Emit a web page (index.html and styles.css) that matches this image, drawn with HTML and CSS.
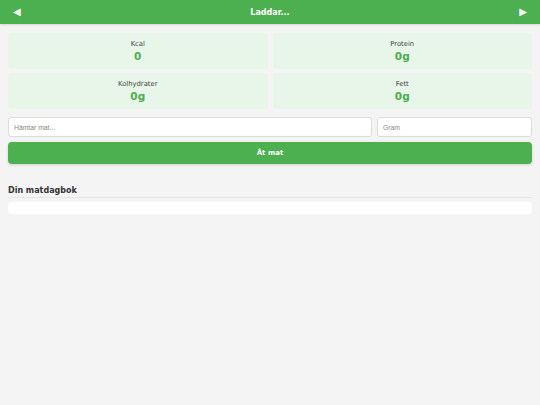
FILE: index.html
```html
<!DOCTYPE html>
<html lang="sv">
<head>
<meta charset="utf-8">
<title>Matdagbok</title>
<link rel="stylesheet" href="styles.css">
</head>
<body>
<header class="topbar">
  <button class="nav-btn" aria-label="Föregående">◀</button>
  <div class="title">Laddar...</div>
  <button class="nav-btn" aria-label="Nästa">▶</button>
</header>
<main class="content">
  <section class="stats">
    <div class="stat">
      <div class="stat-label">Kcal</div>
      <div class="stat-value">0</div>
    </div>
    <div class="stat">
      <div class="stat-label">Protein</div>
      <div class="stat-value">0g</div>
    </div>
    <div class="stat">
      <div class="stat-label">Kolhydrater</div>
      <div class="stat-value">0g</div>
    </div>
    <div class="stat">
      <div class="stat-label">Fett</div>
      <div class="stat-value">0g</div>
    </div>
  </section>
  <section class="entry">
    <div class="inputs">
      <input class="field field-food" type="text" placeholder="Hämtar mat...">
      <input class="field field-gram" type="text" placeholder="Gram">
    </div>
    <button class="eat-btn">Åt mat</button>
  </section>
  <section class="diary">
    <h2 class="diary-title">Din matdagbok</h2>
    <div class="diary-list"></div>
  </section>
</main>
</body>
</html>
```
FILE: styles.css
```css
* { box-sizing: border-box; }
html, body { margin: 0; padding: 0; }
body {
  background: #f3f4f3;
  font-family: "DejaVu Sans", Verdana, sans-serif;
  color: #333;
  width: 540px;
  height: 405px;
}
.topbar {
  height: 24px;
  background: #4caf50;
  color: #fff;
  display: flex;
  align-items: center;
  justify-content: space-between;
  padding: 0 11px 0 11px;
  box-shadow: 0 1px 2px rgba(0,0,0,0.12);
}
.nav-btn {
  background: none;
  border: none;
  color: #fff;
  font-family: "DejaVu Sans", sans-serif;
  font-size: 10px;
  padding: 0 2px;
  line-height: 1;
}
.title {
  font-weight: bold;
  font-size: 8px;
}
.content {
  padding: 9px 8px 8px;
}
.stats {
  display: grid;
  grid-template-columns: 1fr 1fr;
  gap: 4px 5px;
}
.stat {
  background: #e8f5e9;
  border-radius: 4px;
  height: 36px;
  display: flex;
  flex-direction: column;
  align-items: center;
  justify-content: center;
}
.stat-label {
  font-size: 6.8px;
  line-height: 10px;
  color: #444;
}
.stat-value {
  font-size: 10.5px;
  font-weight: bold;
  color: #4caf50;
  line-height: 15px;
}
.entry {
  margin-top: 8px;
}
.inputs {
  display: flex;
  gap: 5px;
}
.field {
  height: 20px;
  border: 1px solid #dcdcdc;
  border-radius: 3px;
  background: #fff;
  padding: 0 5px;
  font-family: "Liberation Sans", Arial, sans-serif;
  font-size: 6.8px;
  color: #333;
  min-width: 0;
  outline: none;
}
.field::placeholder { color: #888; }
.field-food { flex: 1 1 auto; }
.field-gram { flex: 0 0 155px; width: 155px; }
.eat-btn {
  display: block;
  width: 100%;
  height: 22px;
  margin-top: 5px;
  background: #4caf50;
  color: #fff;
  border: none;
  border-radius: 4px;
  font-family: "DejaVu Sans", sans-serif;
  font-weight: bold;
  font-size: 7px;
  box-shadow: 0 1px 3px rgba(0,0,0,0.15);
}
.diary {
  margin-top: 22px;
}
.diary-title {
  margin: 0;
  font-size: 8px;
  font-weight: bold;
  color: #333;
  padding-bottom: 1px;
  border-bottom: 1px solid #e6e6e6;
  line-height: 10px;
}
.diary-list {
  margin-top: 4px;
  height: 12px;
  background: #fff;
  border-radius: 4px;
}
```
